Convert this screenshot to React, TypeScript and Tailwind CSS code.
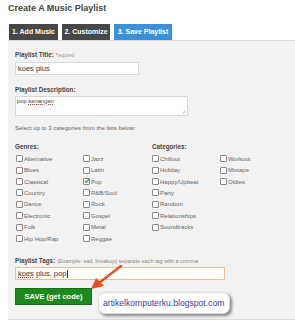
import React from "react";

const genres1 = ["Alternative", "Blues", "Classical", "Country", "Dance", "Electronic", "Folk", "Hip Hop/Rap"];
const genres2 = ["Jazz", "Latin", "Pop", "R&B/Soul", "Rock", "Gospel", "Metal", "Reggae"];
const cats1 = ["Chillout", "Holiday", "Happy/Upbeat", "Party", "Random", "Relationships", "Soundtracks"];
const cats2 = ["Workout", "Mixtape", "Oldies"];

function Box({ label, checked }: { label: string; checked?: boolean }) {
  return (
    <div className="flex items-center h-[11.43px]">
      <span className="relative w-[7px] h-[7px] border border-[#8a8a8a] bg-white rounded-[1px] shrink-0">
        {checked && (
          <svg viewBox="0 0 8 8" className="absolute left-[0px] top-[-1px] w-[6px] h-[6px]">
            <path d="M1 4 L3 6 L7 1" stroke="#2f9a2f" strokeWidth="1.6" fill="none" />
          </svg>
        )}
      </span>
      <span className="ml-[1px] text-[6px] text-[#666] leading-none whitespace-nowrap">{label}</span>
    </div>
  );
}

function Col({ items, checked }: { items: string[]; checked?: string }) {
  return (
    <div className="flex flex-col">
      {items.map((i) => (
        <Box key={i} label={i} checked={i === checked} />
      ))}
    </div>
  );
}

export default function App() {
  return (
    <div
      className="w-[295px] h-[320px] bg-white overflow-hidden flex flex-col"
      style={{ fontFamily: '"Liberation Sans", Arial, sans-serif' }}
    >
      <div className="pl-[8px] pt-[3px] h-[14px] text-[9px] font-bold text-[#444] leading-[10px]">
        Create A Music Playlist
      </div>
      <div className="flex ml-[9px] mt-[10px] h-[16px] gap-[4px] text-[7px] font-bold text-white">
        <div className="w-[49px] bg-[#474747] flex items-center justify-center">1. Add Music</div>
        <div className="w-[48px] bg-[#474747] flex items-center justify-center">2. Customize</div>
        <div className="w-[58px] bg-[#3d8fd6] flex items-center justify-center">3. Save Playlist</div>
      </div>
      <div className="ml-[8px] flex-1 bg-[#f2f2f2] border-t border-[#dcdcdc] border-b pl-[7px] flex flex-col">
        <div className="mt-[9px] h-[8px] flex items-end text-[6.3px] font-bold text-[#444] leading-none">
          Playlist Title:
          <span className="ml-[2px] text-[4.5px] font-normal text-[#999]">
            <span className="text-[#d44]">*</span>required
          </span>
        </div>
        <div className="mt-[4px] w-[124px] h-[13px] bg-white border border-[#d8d8d8] flex items-center pl-[2px] text-[7.5px] text-[#333]">
          koes plus
        </div>
        <div className="mt-[10px] h-[8px] flex items-end text-[6.3px] font-bold text-[#444] leading-none">
          Playlist Description:
        </div>
        <div className="relative mt-[3px] w-[173px] h-[20px] bg-white border border-[#d8d8d8] pl-[1px] pt-[2px] text-[5.8px] text-[#444] leading-none">
          pop <span className="underline decoration-dotted decoration-[#d33]">kenangan</span>
          <svg viewBox="0 0 6 6" className="absolute right-[1px] bottom-[1px] w-[4px] h-[4px]">
            <path d="M1 5 L5 1 M3 5 L5 3" stroke="#999" strokeWidth="0.8" />
          </svg>
        </div>
        <div className="mt-[9px] text-[6px] text-[#666] leading-none">
          Select up to 3 categories from the lists below:
        </div>
        <div className="mt-[13px] flex">
          <div className="w-[137px] flex flex-col">
            <div className="text-[6.3px] font-bold text-[#444] leading-none h-[8px]">Genres:</div>
            <div className="mt-[1px] ml-[1px] flex">
              <div className="w-[67px]">
                <Col items={genres1} />
              </div>
              <Col items={genres2} checked="Pop" />
            </div>
          </div>
          <div className="flex flex-col">
            <div className="text-[6.3px] font-bold text-[#444] leading-none h-[8px]">Categories:</div>
            <div className="mt-[1px] flex">
              <div className="w-[68px]">
                <Col items={cats1} />
              </div>
              <Col items={cats2} />
            </div>
          </div>
        </div>
        <div className="mt-[12px] h-[8px] flex items-end text-[6.3px] font-bold text-[#444] leading-none whitespace-nowrap">
          Playlist Tags:
          <span className="ml-[2px] text-[5.5px] font-normal text-[#888]">
            (Example: sad, breakup) separate each tag with a comma
          </span>
        </div>
        <div className="mt-[3px] w-[210px] h-[13px] bg-white border border-[#e7c48f] flex items-center pl-[2px] text-[7.5px] text-[#333]">
          <span className="underline decoration-dotted decoration-[#d33]">koes</span>&nbsp;plus, pop
          <span className="w-[1px] h-[8px] bg-[#333] ml-[0.5px]" />
        </div>
        <div className="relative mt-[8px] flex items-start">
          <div className="w-[77px] h-[17px] bg-[#1c8a1c] border border-[#147014] flex items-center justify-center text-[7.5px] font-bold text-white">
            SAVE (get code)
          </div>
          <div className="ml-[6px] mt-[4px] w-[132px] h-[22px] bg-white rounded-[7px] shadow-[2px_2px_3px_rgba(0,0,0,0.45)] border border-[#ddd] flex items-center pl-[4px] text-[8.6px] text-[#3b3b99]">
            artikelkomputerku.blogspot.com
          </div>
          <svg
            viewBox="0 0 40 30"
            className="absolute left-[72px] top-[-24px] w-[40px] h-[30px] overflow-visible"
          >
            <path d="M34 2 L12 19" stroke="#e8501f" strokeWidth="2.4" strokeLinecap="round" />
            <path d="M4 25 L9 14 L17 22 Z" fill="#e8501f" />
          </svg>
        </div>
      </div>
    </div>
  );
}
